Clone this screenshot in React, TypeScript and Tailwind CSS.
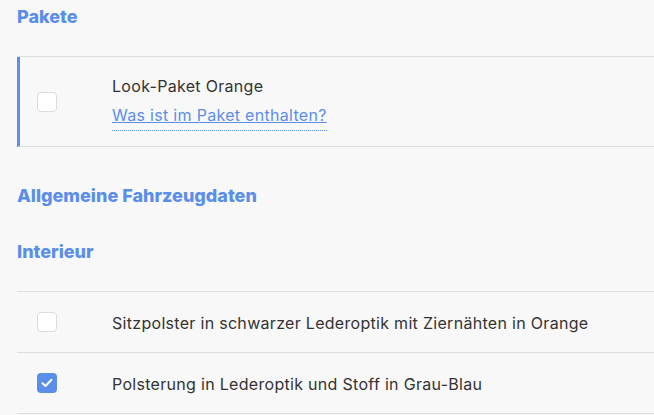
import React from "react";

const blue = "text-[#5b8ee8]";

function Check({ checked }: { checked?: boolean }) {
  if (checked) {
    return (
      <div className="w-[20px] h-[20px] rounded-[4px] bg-[#5b8ee8] flex items-center justify-center shrink-0">
        <svg width="12" height="10" viewBox="0 0 12 10" fill="none">
          <path d="M1.5 5.2 L4.5 8 L10.5 1.8" stroke="white" strokeWidth="2" strokeLinecap="round" strokeLinejoin="round" />
        </svg>
      </div>
    );
  }
  return <div className="w-[20px] h-[20px] rounded-[4px] border border-[#dcdcdc] bg-white shrink-0" />;
}

function Row({ label, checked }: { label: string; checked?: boolean }) {
  return (
    <div className="h-[61px] border-b border-[#dedede] flex items-center">
      <div className="w-[95px] pl-[20px] flex items-center">
        <Check checked={checked} />
      </div>
      <span className="text-[16px] tracking-[0.3px] text-[#333] pt-[1px]">{label}</span>
    </div>
  );
}

const h = `text-[18px] font-extrabold leading-[22px] ${blue}`;

export default function App() {
  return (
    <div className="w-[654px] h-[415px] bg-[#f8f8f8] overflow-hidden pl-[17px]" style={{ fontFamily: "Inter, 'Open Sans', sans-serif" }}>
      <div className="h-[57px] border-b border-[#dedede] pt-[6px]">
        <h2 className={h}>Pakete</h2>
      </div>
      <div className="h-[90px] border-b border-[#dedede] border-l-[3px] border-l-[#5b8ee8] flex items-center">
        <div className="w-[92px] pl-[17px] flex items-center">
          <Check />
        </div>
        <div className="flex flex-col pt-[4px]">
          <span className="text-[16px] tracking-[0.3px] text-[#333] leading-[20px]">Look-Paket Orange</span>
          <span className="mt-[7px] self-start border-b border-dotted border-[#5b8ee8] pb-[3px]">
            <a className={`text-[16px] tracking-[0.3px] leading-[20px] underline ${blue}`}>Was ist im Paket enthalten?</a>
          </span>
        </div>
      </div>
      <div className="h-[145px] border-b border-[#dedede] pt-[38px]">
        <h2 className={h}>Allgemeine Fahrzeugdaten</h2>
        <h2 className={`mt-[34px] ${h}`}>Interieur</h2>
      </div>
      <Row label="Sitzpolster in schwarzer Lederoptik mit Ziernähten in Orange" />
      <Row label="Polsterung in Lederoptik und Stoff in Grau-Blau" checked />
    </div>
  );
}
